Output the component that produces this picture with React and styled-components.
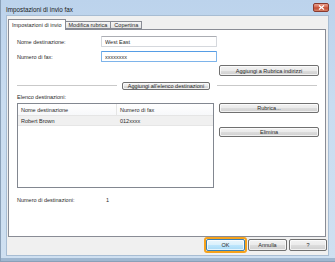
import React from 'react';
import styled, { createGlobalStyle } from 'styled-components';

const GlobalStyle = createGlobalStyle`
    html, body {
        margin: 0;
        padding: 0;
        background: #ffffff;
    }
    body {
        font-family: "Liberation Sans", Arial, sans-serif;
        font-size: 5.5px;
        color: #2a2a2a;
    }
`

const App = () => {

    return (
        <>
            <GlobalStyle />
            <Window>
                <TitleBar>
                    <Title>Impostazioni di invio fax</Title>
                    <CloseButton>
                        <svg width="7" height="5" viewBox="0 0 7 5">
                            <path d="M1 0.5 L6 4.5 M6 0.5 L1 4.5" stroke="#ffffff" strokeWidth="1.3" />
                        </svg>
                    </CloseButton>
                </TitleBar>
                <Client>
                    <TabStrip>
                        <Tab $active>Impostazioni di invio</Tab>
                        <Tab>Modifica rubrica</Tab>
                        <Tab>Copertina</Tab>
                    </TabStrip>
                    <Panel>
                        <FieldRow>
                            <FieldLabel>Nome destinazione:</FieldLabel>
                            <TextField readOnly value="West East" />
                        </FieldRow>
                        <FieldRow $gap={4}>
                            <FieldLabel>Numero di fax:</FieldLabel>
                            <TextField readOnly value="xxxxxxxx" $focused />
                        </FieldRow>
                        <RightRow>
                            <Button $w={100} $h={11}>Aggiungi a Rubrica indirizzi</Button>
                        </RightRow>
                        <SeparatorRow>
                            <Line />
                            <Button $w={88} $h={8}>Aggiungi all'elenco destinazioni</Button>
                            <Line $w={100} />
                        </SeparatorRow>
                        <ListLabel>Elenco destinazioni:</ListLabel>
                        <ListArea>
                            <ListBox>
                                <ListHeader>
                                    <HeaderCell $w={99}>Nome destinazione</HeaderCell>
                                    <HeaderCell>Numero di fax</HeaderCell>
                                </ListHeader>
                                <ListRow>
                                    <RowCell $w={99}>Robert Brown</RowCell>
                                    <RowCell>012xxxx</RowCell>
                                </ListRow>
                            </ListBox>
                            <SideButtons>
                                <Button $w={100} $h={10}>Rubrica...</Button>
                                <Button $w={100} $h={10}>Elimina</Button>
                            </SideButtons>
                        </ListArea>
                        <CountRow>
                            <CountLabel>Numero di destinazioni:</CountLabel>
                            <span>1</span>
                        </CountRow>
                    </Panel>
                    <Footer>
                        <FocusRing>
                            <Button $w={39} $h={12} $default>OK</Button>
                        </FocusRing>
                        <Button $w={39} $h={12}>Annulla</Button>
                        <Button $w={38} $h={12}>?</Button>
                    </Footer>
                </Client>
            </Window>
        </>
    )
}

const Window = styled.div`
    width: 335px;
    height: 262px;
    box-sizing: border-box;
    padding: 0 7px 6px 6px;
    display: flex;
    flex-direction: column;
    background: linear-gradient(to bottom, #bcd3ec 0%, #c9dcf0 40%, #cfe0f1 100%);
    border-left: 1px solid #8aa0b8;
    border-bottom: 1px solid #8aa0b8;
    box-shadow: inset 0 -3px 0 #9fb7d0;
`

const TitleBar = styled.div`
    height: 16px;
    display: flex;
    align-items: center;
    justify-content: space-between;
    flex-shrink: 0;
`

const Title = styled.div`
    font-size: 6.3px;
    color: #1a1a1a;
    padding-top: 2px;
    margin-left: -1px;
`

const CloseButton = styled.div`
    width: 16px;
    height: 9px;
    margin-right: -1px;
    margin-top: -1px;
    box-sizing: border-box;
    border: 1px solid #8a3a2e;
    border-radius: 2px;
    background: linear-gradient(to bottom, #e8a08e 0%, #d56a52 45%, #c04a30 55%, #d7836a 100%);
    display: flex;
    align-items: center;
    justify-content: center;
`

const Client = styled.div`
    flex: 1;
    background: #f0f0f0;
    padding: 3px 1px 0 1px;
    display: flex;
    flex-direction: column;
    box-shadow: 0 0 0 1px #a8bdd3;
`

const TabStrip = styled.div`
    display: flex;
    align-items: flex-end;
    height: 10px;
    position: relative;
    z-index: 1;
`

const Tab = styled.div`
    height: ${props => props.$active ? '11px' : '8px'};
    box-sizing: border-box;
    padding: 0 3px;
    margin-left: ${props => props.$active ? '0' : '-1px'};
    border: 1px solid #898c95;
    border-bottom: ${props => props.$active ? 'none' : '1px solid #898c95'};
    background: ${props => props.$active ? '#ffffff' : 'linear-gradient(to bottom, #f6f6f6, #e3e3e3)'};
    display: flex;
    align-items: center;
    white-space: nowrap;
    margin-bottom: ${props => props.$active ? '-1px' : '0'};
    position: relative;
    z-index: ${props => props.$active ? 2 : 1};
`

const Panel = styled.div`
    height: 208px;
    box-sizing: border-box;
    background: #ffffff;
    border: 1px solid #898c95;
    margin-right: 1px;
    padding: 6px 6px 0 8px;
    display: flex;
    flex-direction: column;
`

const FieldRow = styled.div`
    display: flex;
    align-items: center;
    height: 11px;
    margin-top: ${props => props.$gap || 0}px;
`

const FieldLabel = styled.div`
    width: 84px;
    flex-shrink: 0;
`

const TextField = styled.input`
    width: 116px;
    height: 11px;
    box-sizing: border-box;
    margin: 0;
    padding: 0 3px;
    font-family: "Liberation Sans", Arial, sans-serif;
    font-size: 5.5px;
    color: #2a2a2a;
    background: #ffffff;
    outline: none;
    border: 1px solid ${props => props.$focused ? '#7eb4ea' : '#d5d8dd'};
    border-top-color: ${props => props.$focused ? '#569de5' : '#abadb3'};
    border-radius: 1px;
`

const RightRow = styled.div`
    display: flex;
    justify-content: flex-end;
    margin-top: 3px;
`

const Button = styled.div`
    width: ${props => props.$w}px;
    height: ${props => props.$h}px;
    box-sizing: border-box;
    flex-shrink: 0;
    border: 1px solid ${props => props.$default ? '#3c7fb1' : '#707070'};
    border-radius: 2px;
    background: ${props => props.$default
        ? 'linear-gradient(to bottom, #eaf6fd 0%, #d9f0fc 50%, #bee6fd 51%, #a7d9f5 100%)'
        : 'linear-gradient(to bottom, #f2f2f2 0%, #ebebeb 50%, #dddddd 51%, #cfcfcf 100%)'};
    box-shadow: inset 0 0 0 1px rgba(255, 255, 255, 0.7);
    display: flex;
    align-items: center;
    justify-content: center;
    white-space: nowrap;
    overflow: hidden;
`

const SeparatorRow = styled.div`
    display: flex;
    align-items: center;
    gap: 5px;
    margin-top: 6px;
    padding-right: 2px;
`

const Line = styled.div`
    height: 1px;
    background: #c9c9c9;
    border-bottom: 1px solid #ffffff;
    flex: ${props => props.$w ? `0 0 ${props.$w}px` : '1'};
    margin-left: ${props => props.$w ? '2px' : '0'};
`

const ListLabel = styled.div`
    margin-top: 4px;
    height: 7px;
    line-height: 7px;
`

const ListArea = styled.div`
    display: flex;
    margin-top: 2px;
    gap: 5px;
`

const ListBox = styled.div`
    width: 200px;
    height: 85px;
    box-sizing: border-box;
    border: 1px solid #828790;
    background: #ffffff;
`

const ListHeader = styled.div`
    display: flex;
    height: 11px;
    border-bottom: 1px solid #e5e5e5;
    background: linear-gradient(to bottom, #ffffff, #f7f8fa);
`

const HeaderCell = styled.div`
    width: ${props => props.$w ? `${props.$w}px` : 'auto'};
    flex: ${props => props.$w ? 'none' : '1'};
    box-sizing: border-box;
    padding-left: 3px;
    display: flex;
    align-items: center;
    border-right: ${props => props.$w ? '1px solid #e5e5e5' : 'none'};
`

const ListRow = styled.div`
    display: flex;
    height: 9px;
    background: #f0f0f0;
    border-bottom: 1px solid #e6e6e6;
`

const RowCell = styled.div`
    width: ${props => props.$w ? `${props.$w}px` : 'auto'};
    flex: ${props => props.$w ? 'none' : '1'};
    box-sizing: border-box;
    padding-left: 3px;
    display: flex;
    align-items: center;
`

const SideButtons = styled.div`
    display: flex;
    flex-direction: column;
    gap: 14px;
`

const CountRow = styled.div`
    display: flex;
    margin-top: 9px;
    height: 7px;
    line-height: 7px;
`

const CountLabel = styled.div`
    width: 89px;
`

const Footer = styled.div`
    display: flex;
    align-items: center;
    justify-content: flex-end;
    gap: 2px;
    margin-top: 0;
    height: 16px;
`

const FocusRing = styled.div`
    padding: 0;
    border: 2px solid #f5a21c;
    border-radius: 3px;
    margin-right: -1px;
`

export default App;
